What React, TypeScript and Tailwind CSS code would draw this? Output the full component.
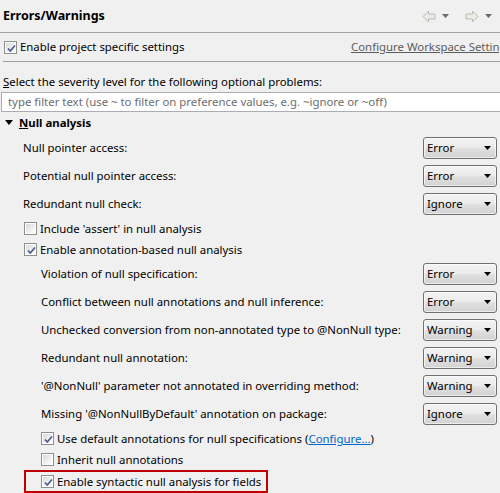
import React from "react";

function Check({ checked }: { checked: boolean }) {
  return (
    <span className="relative inline-block w-[13px] h-[13px] border border-[#8e8f8f] bg-white shrink-0">
      <span className="absolute inset-[1px] bg-[linear-gradient(135deg,#d8d9dc_0%,#f4f4f4_70%,#ffffff_100%)]" />
      {checked && (
        <svg className="absolute left-[1px] top-[1px]" width="11" height="11" viewBox="0 0 11 11">
          <path d="M2 5.5 L4.3 8 L9 2.5" fill="none" stroke="#4a5d8f" strokeWidth="1.7" />
        </svg>
      )}
    </span>
  );
}

function Combo({ value }: { value: string }) {
  return (
    <div className="w-[74px] h-[22px] shrink-0 rounded-[3px] border border-[#707070] bg-[linear-gradient(to_bottom,#f3f3f3_0%,#ececec_45%,#dfdfdf_55%,#d2d2d2_100%)] flex items-center justify-between pl-[3px] pr-[5px] shadow-[inset_0_0_0_1px_rgba(255,255,255,0.6)]">
      <span className="text-black leading-none">{value}</span>
      <svg width="7" height="4" viewBox="0 0 7 4">
        <path d="M0 0 H7 L3.5 4 Z" fill="#000" />
      </svg>
    </div>
  );
}

function ComboRow({ label, value, indent }: { label: string; value: string; indent: number }) {
  return (
    <div className="h-[28px] flex items-center justify-between pr-[3px]" style={{ paddingLeft: indent }}>
      <span className="whitespace-nowrap">{label}</span>
      <Combo value={value} />
    </div>
  );
}

function CheckRow({ label, checked, indent, children }: { label?: string; checked: boolean; indent: number; children?: React.ReactNode }) {
  return (
    <div className="h-[21px] flex items-center gap-[3px]" style={{ paddingLeft: indent }}>
      <Check checked={checked} />
      <span className="whitespace-nowrap">{children ?? label}</span>
    </div>
  );
}

function Arrow({ dir }: { dir: "left" | "right" }) {
  const d =
    dir === "left"
      ? "M1 6.5 L6.5 1 V4 H13 V9 H6.5 V12 Z"
      : "M13 6.5 L7.5 1 V4 H1 V9 H7.5 V12 Z";
  return (
    <svg width="14" height="13" viewBox="0 0 14 13">
      <path d={d} fill="#ecece6" stroke="#b9b9b3" strokeWidth="1" strokeLinejoin="round" />
    </svg>
  );
}

function SmallTri() {
  return (
    <svg width="7" height="4" viewBox="0 0 7 4">
      <path d="M0 0 H7 L3.5 4 Z" fill="#6a6a6a" />
    </svg>
  );
}

export default function App() {
  return (
    <div className="w-[500px] h-[493px] overflow-hidden bg-[#f0f0f0] text-[11.4px] text-black font-['Noto_Sans',sans-serif] leading-none">
      {/* header */}
      <div className="h-[32px] flex items-center justify-between pl-[3px] pr-[8px]">
        <span className="font-bold text-[12.5px]">Errors/Warnings</span>
        <div className="flex items-center gap-[6px]">
          <Arrow dir="left" />
          <SmallTri />
          <span className="w-[4px]" />
          <Arrow dir="right" />
          <SmallTri />
        </div>
      </div>
      <div className="h-px bg-[#a0a0a0]" />
      <div className="h-[28px] flex items-center pl-[4px]">
        <div className="w-[347px] shrink-0 flex items-center gap-[3px]">
          <Check checked />
          <span className="whitespace-nowrap">
            Enable pro<span className="underline">j</span>ect specific settings
          </span>
        </div>
        <span className="text-[#5c5c5c] underline whitespace-nowrap">Configure Workspace Settings...</span>
      </div>
      <div className="h-px bg-[#a0a0a0] ml-[3px]" />
      <div className="h-[30px] flex items-end pb-[5px] pl-[3px]">
        <span className="whitespace-nowrap">
          <span className="underline">S</span>elect the severity level for the following optional problems:
        </span>
      </div>
      <div className="h-[20px] ml-[1px] mr-[-10px] border border-[#abadb3] bg-white flex items-center pl-[6px] text-[#6d6d6d] whitespace-nowrap">
        type filter text (use ~ to filter on preference values, e.g. ~ignore or ~off)
      </div>
      <div className="h-[21px] flex items-center pl-[5px] gap-[6px]">
        <svg width="8" height="5" viewBox="0 0 8 5">
          <path d="M0 0 H8 L4 5 Z" fill="#000" />
        </svg>
        <span className="font-bold">
          <span className="underline">N</span>ull analysis
        </span>
      </div>
      <div className="h-[1px]" />
      <ComboRow label="Null pointer access:" value="Error" indent={23} />
      <ComboRow label="Potential null pointer access:" value="Error" indent={23} />
      <ComboRow label="Redundant null check:" value="Ignore" indent={23} />
      <CheckRow label="Include 'assert' in null analysis" checked={false} indent={24} />
      <CheckRow label="Enable annotation-based null analysis" checked indent={24} />
      <ComboRow label="Violation of null specification:" value="Error" indent={41} />
      <ComboRow label="Conflict between null annotations and null inference:" value="Error" indent={41} />
      <ComboRow label="Unchecked conversion from non-annotated type to @NonNull type:" value="Warning" indent={41} />
      <ComboRow label="Redundant null annotation:" value="Warning" indent={41} />
      <ComboRow label="'@NonNull' parameter not annotated in overriding method:" value="Warning" indent={41} />
      <ComboRow label="Missing '@NonNullByDefault' annotation on package:" value="Ignore" indent={41} />
      <CheckRow checked indent={41}>
        Use default annotations for null specifications (
        <span className="text-[#0066cc] underline">Configure...</span>)
      </CheckRow>
      <CheckRow label="Inherit null annotations" checked={false} indent={41} />
      <div className="ml-[24px] w-[244px] h-[23px] border-2 border-[#c00000] flex items-center gap-[3px] pl-[15px]">
        <Check checked />
        <span className="whitespace-nowrap">Enable syntactic null analysis for fields</span>
      </div>
    </div>
  );
}
